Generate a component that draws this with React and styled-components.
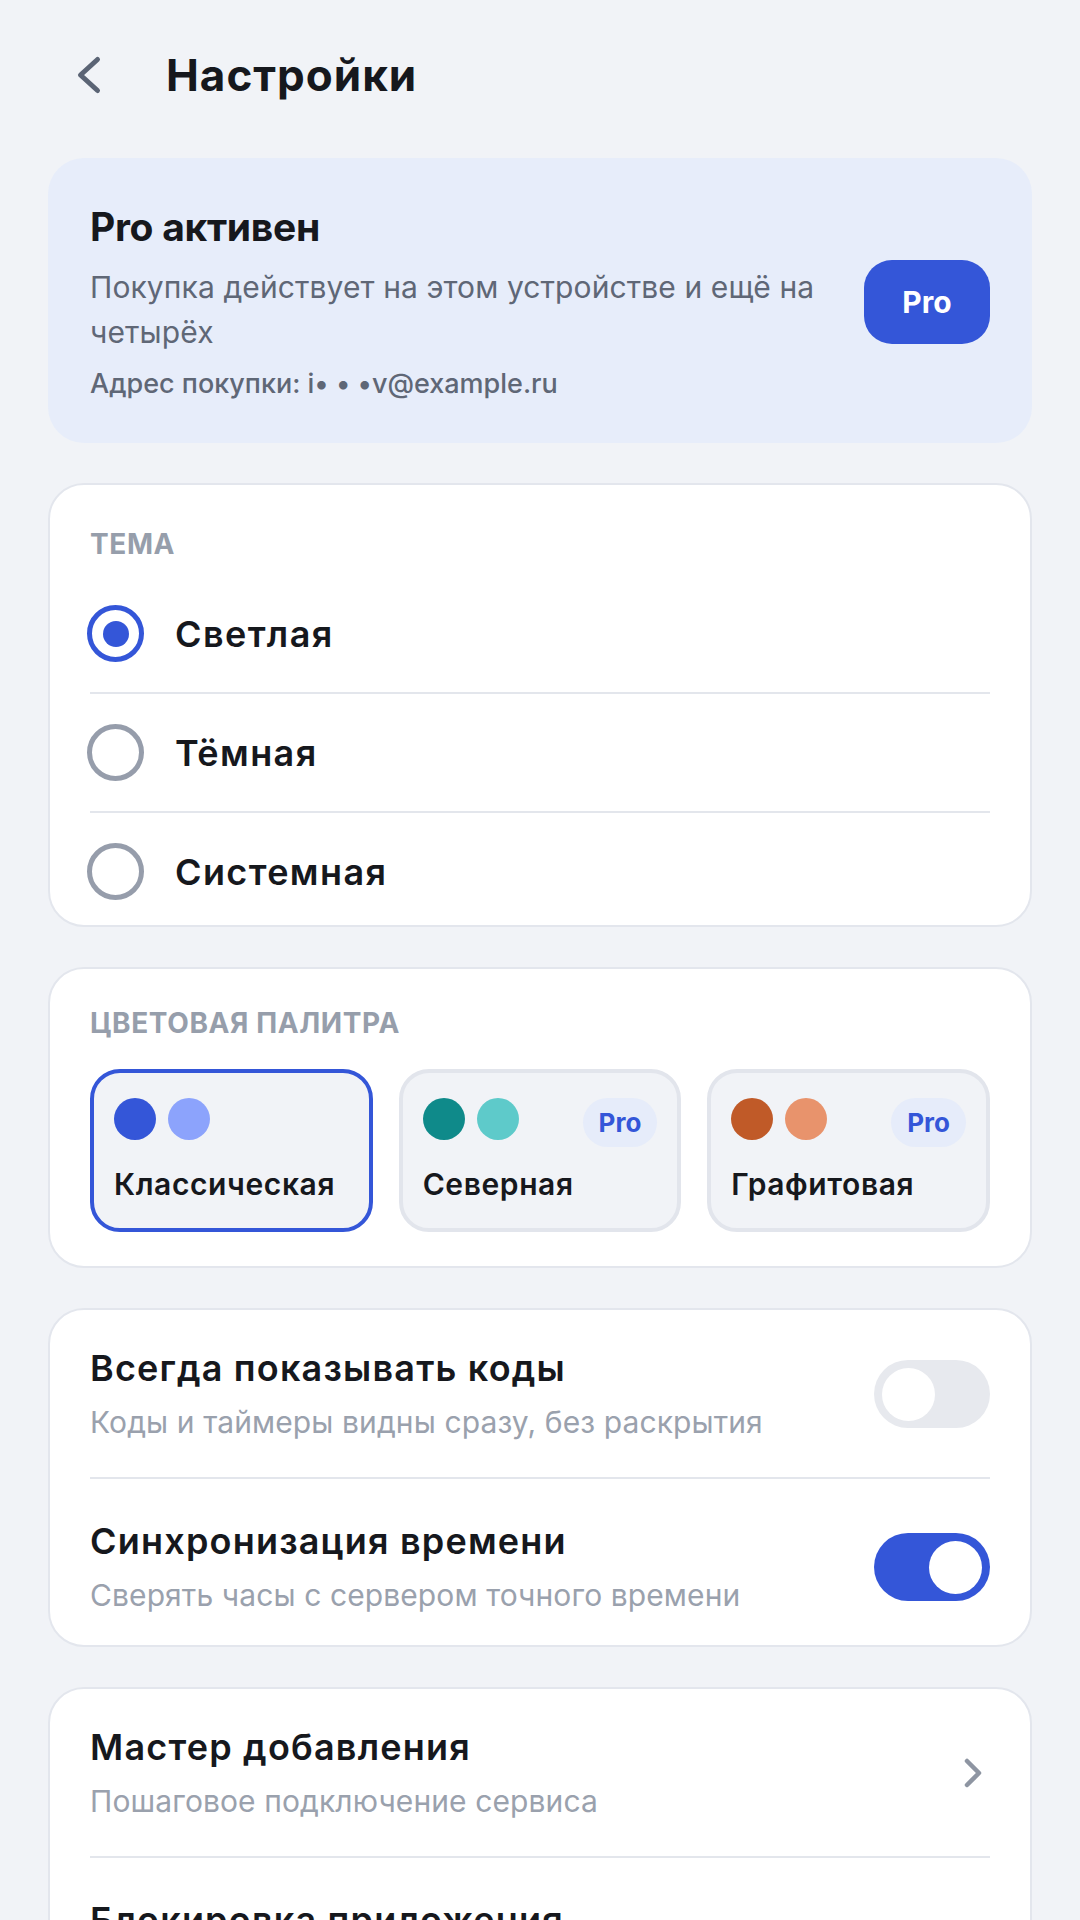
import React from 'react';
import styled, { createGlobalStyle } from 'styled-components';

const GlobalStyle = createGlobalStyle`
  html, body { margin: 0; padding: 0; background: #f1f3f7; }
  body {
    font-family: Inter, "Noto Sans", sans-serif;
    color: #16181d;
    -webkit-font-smoothing: antialiased;
  }
  * { box-sizing: border-box; }
`;

const Page = styled.div`
  width: 1080px;
  min-height: 1920px;
  padding: 51px 48px 40px;
  display: flex;
  flex-direction: column;
  gap: 40px;
  overflow: hidden;
`;

const Header = styled.header`
  display: flex;
  align-items: center;
  gap: 64px;
  padding-left: 28px;
  margin-bottom: 19px;
`;

const BackButton = styled.button`
  display: flex;
  padding: 0;
  border: none;
  background: none;
  color: #5b6475;
`;

const Title = styled.h1`
  margin: 0;
  font-size: 44px;
  line-height: 48px;
  font-weight: 700;
  letter-spacing: 1px;
`;

const ProCard = styled.section`
  display: flex;
  align-items: center;
  gap: 36px;
  padding: 45px 42px 42px;
  background: #e7edfa;
  border-radius: 36px;
`;

const ProInfo = styled.div`
  flex: 1;
  display: flex;
  flex-direction: column;
`;

const ProTitle = styled.div`
  font-size: 39px;
  line-height: 48px;
  font-weight: 700;
  letter-spacing: -0.3px;
  margin-bottom: 14px;
`;

const ProText = styled.div`
  font-size: 30px;
  line-height: 45px;
  letter-spacing: 0.1px;
  color: #5f6776;
`;

const ProEmail = styled.div`
  margin-top: 12px;
  font-size: 27px;
  line-height: 34px;
  font-weight: 500;
  color: #5f6776;
`;

const ProButton = styled.button`
  flex-shrink: 0;
  width: 126px;
  height: 84px;
  border: none;
  border-radius: 28px;
  background: #3456d8;
  color: #fff;
  font-family: inherit;
  font-size: 30px;
  font-weight: 700;
`;

const Card = styled.section`
  background: #fff;
  border: 2px solid #e3e6ed;
  border-radius: 36px;
  padding: ${(p) => p.$pad || '0 40px'};
`;

const SectionLabel = styled.div`
  font-size: 28px;
  line-height: 34px;
  font-weight: 700;
  letter-spacing: 0.6px;
  text-transform: uppercase;
  color: #969eab;
  margin-bottom: ${(p) => p.$gap}px;
`;

const RadioRow = styled.div`
  display: flex;
  align-items: center;
  gap: 31px;
  padding: 30px 0;
  & + & { border-top: 2px solid #e3e6ec; }
  &:last-child { padding-bottom: 25px; }
`;

const RadioCircle = styled.span`
  width: 57px;
  height: 57px;
  margin-left: -3px;
  border-radius: 50%;
  border: 5px solid ${(p) => (p.$checked ? '#3456d8' : '#969dab')};
  display: flex;
  align-items: center;
  justify-content: center;
  flex-shrink: 0;
`;

const RadioDot = styled.span`
  width: 26px;
  height: 26px;
  border-radius: 50%;
  background: #3456d8;
`;

const RadioLabel = styled.span`
  font-size: 36px;
  line-height: 44px;
  font-weight: 600;
  letter-spacing: 1.4px;
`;

const TileGrid = styled.div`
  display: grid;
  grid-template-columns: repeat(3, 1fr);
  gap: 26px;
`;

const Tile = styled.div`
  display: flex;
  flex-direction: column;
  gap: 19px;
  padding: 25px 20px 26px;
  border: 4px solid ${(p) => (p.$selected ? '#3456d8' : '#e2e5ec')};
  border-radius: 30px;
  background: #f1f3f7;
`;

const TileTop = styled.div`
  display: flex;
  justify-content: space-between;
  align-items: flex-start;
  min-height: 49px;
`;

const Dots = styled.div`
  display: flex;
  gap: 12px;
`;

const Dot = styled.span`
  width: 42px;
  height: 42px;
  border-radius: 50%;
  background: ${(p) => p.$color};
`;

const Badge = styled.span`
  height: 49px;
  padding: 0 16px;
  border-radius: 25px;
  background: #e6ecfa;
  color: #3456d8;
  font-size: 26px;
  font-weight: 700;
  display: flex;
  align-items: center;
`;

const TileName = styled.div`
  font-size: 30px;
  line-height: 36px;
  font-weight: 600;
  letter-spacing: 0.6px;
  white-space: nowrap;
`;

const SettingRow = styled.div`
  display: flex;
  align-items: center;
  gap: 24px;
  padding: 40px 0 35px;
  & + & { border-top: 2px solid #e3e6ec; }
  &:first-child { padding-top: 36px; }
  &:last-child { padding-bottom: 30px; }
`;

const SettingText = styled.div`
  flex: 1;
  display: flex;
  flex-direction: column;
  gap: 12px;
`;

const SettingTitle = styled.div`
  font-size: 36px;
  line-height: 44px;
  font-weight: 600;
  letter-spacing: 1.2px;
`;

const SettingSub = styled.div`
  font-size: 30px;
  line-height: 40px;
  letter-spacing: 0.1px;
  color: #9aa1ad;
`;

const Toggle = styled.span`
  flex-shrink: 0;
  width: 116px;
  height: 68px;
  border-radius: 34px;
  padding: 0 8px;
  display: flex;
  align-items: center;
  justify-content: ${(p) => (p.$on ? 'flex-end' : 'flex-start')};
  background: ${(p) => (p.$on ? '#3456d8' : '#e7e9ee')};
`;

const Knob = styled.span`
  width: 53px;
  height: 53px;
  border-radius: 50%;
  background: #fff;
`;

const Chevron = styled.svg`
  flex-shrink: 0;
  color: #8e95a2;
`;

const themes = [
  { label: 'Светлая', checked: true },
  { label: 'Тёмная', checked: false },
  { label: 'Системная', checked: false },
];

const palettes = [
  { name: 'Классическая', colors: ['#3456d8', '#8ca3fc'], selected: true, pro: false },
  { name: 'Северная', colors: ['#0f8a8a', '#5ecaca'], selected: false, pro: true },
  { name: 'Графитовая', colors: ['#c05a28', '#e8936c'], selected: false, pro: true },
];

const toggles = [
  { title: 'Всегда показывать коды', sub: 'Коды и таймеры видны сразу, без раскрытия', on: false },
  { title: 'Синхронизация времени', sub: 'Сверять часы с сервером точного времени', on: true },
];

const links = [
  { title: 'Мастер добавления', sub: 'Пошаговое подключение сервиса' },
  { title: 'Блокировка приложения', sub: 'PIN-код и биометрия' },
];

export default function App() {
  return (
    <>
      <GlobalStyle />
      <Page>
        <Header>
          <BackButton aria-label="Назад">
            <svg width="26" height="40" viewBox="0 0 26 40" fill="none">
              <polyline
                points="21.5,4.5 4.5,20 21.5,35.5"
                stroke="currentColor"
                strokeWidth="5"
                strokeLinecap="round"
                strokeLinejoin="round"
              />
            </svg>
          </BackButton>
          <Title>Настройки</Title>
        </Header>

        <ProCard>
          <ProInfo>
            <ProTitle>Pro активен</ProTitle>
            <ProText>Покупка действует на этом устройстве и ещё на четырёх</ProText>
            <ProEmail>Адрес покупки: i• • •v@example.ru</ProEmail>
          </ProInfo>
          <ProButton>Pro</ProButton>
        </ProCard>

        <Card $pad="42px 40px 0">
          <SectionLabel $gap={14}>Тема</SectionLabel>
          {themes.map((t) => (
            <RadioRow key={t.label}>
              <RadioCircle $checked={t.checked}>{t.checked && <RadioDot />}</RadioCircle>
              <RadioLabel>{t.label}</RadioLabel>
            </RadioRow>
          ))}
        </Card>

        <Card $pad="37px 40px 34px">
          <SectionLabel $gap={29}>Цветовая палитра</SectionLabel>
          <TileGrid>
            {palettes.map((p) => (
              <Tile key={p.name} $selected={p.selected}>
                <TileTop>
                  <Dots>
                    {p.colors.map((c) => (
                      <Dot key={c} $color={c} />
                    ))}
                  </Dots>
                  {p.pro && <Badge>Pro</Badge>}
                </TileTop>
                <TileName>{p.name}</TileName>
              </Tile>
            ))}
          </TileGrid>
        </Card>

        <Card>
          {toggles.map((t) => (
            <SettingRow key={t.title}>
              <SettingText>
                <SettingTitle>{t.title}</SettingTitle>
                <SettingSub>{t.sub}</SettingSub>
              </SettingText>
              <Toggle $on={t.on}>
                <Knob />
              </Toggle>
            </SettingRow>
          ))}
        </Card>

        <Card>
          {links.map((l) => (
            <SettingRow key={l.title}>
              <SettingText>
                <SettingTitle>{l.title}</SettingTitle>
                <SettingSub>{l.sub}</SettingSub>
              </SettingText>
              <Chevron width="30" height="32" viewBox="0 0 30 32" fill="none">
                <polyline
                  points="7,4 19,16 7,28"
                  stroke="currentColor"
                  strokeWidth="4.5"
                  strokeLinecap="round"
                  strokeLinejoin="round"
                />
              </Chevron>
            </SettingRow>
          ))}
        </Card>
      </Page>
    </>
  );
}
